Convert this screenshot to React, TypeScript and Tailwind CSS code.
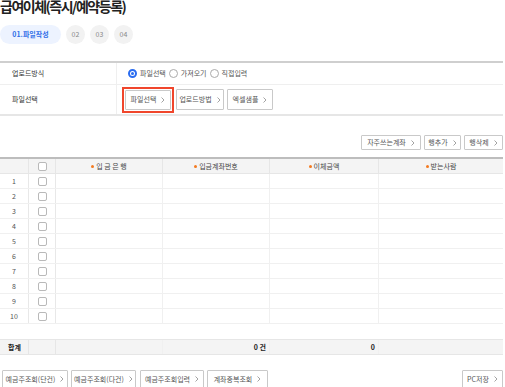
import React from "react";

const font = { fontFamily: '"Noto Sans CJK KR", "Noto Sans", sans-serif' };

function Chev() {
  return (
    <svg width="4" height="6" viewBox="0 0 4 6" className="ml-[5px] shrink-0">
      <path d="M0.5 0.5 L3 3 L0.5 5.5" fill="none" stroke="#999" strokeWidth="0.9" />
    </svg>
  );
}

function Btn({ label, className = "" }: { label: string; className?: string }) {
  return (
    <div
      className={
        "flex items-center justify-center border border-[#c9c9c9] bg-white text-[7px] text-[#555] rounded-[1px] " +
        className
      }
    >
      <span>{label}</span>
      <Chev />
    </div>
  );
}

function Radio({ on }: { on?: boolean }) {
  return on ? (
    <span className="w-[9px] h-[9px] rounded-full border-[2px] border-[#2a6cf0] flex items-center justify-center bg-white">
      <span className="w-[3px] h-[3px] rounded-full bg-[#2a6cf0]" />
    </span>
  ) : (
    <span className="w-[9px] h-[9px] rounded-full border border-[#aaa] bg-white" />
  );
}

function Check() {
  return <span className="block w-[9px] h-[9px] rounded-[2px] border border-[#b9b9b9] bg-white" />;
}

const cols = "grid grid-cols-[28px_27px_107px_107px_109px_125px]";

function HeadCell({ label }: { label: string }) {
  return (
    <div className="flex items-center justify-center border-l border-[#e6e6e6] text-[7px] text-[#444]">
      <span className="w-[3px] h-[3px] rounded-full bg-[#f47a20] mr-[2px]" />
      <span>{label}</span>
    </div>
  );
}

export default function App() {
  const rows = Array.from({ length: 10 }, (_, i) => i + 1);
  return (
    <div className="w-[505px] h-[387px] overflow-hidden bg-white relative" style={font}>
      {/* title */}
      <div className="h-[16px] -mt-[2px] text-[14px] leading-[16px] font-bold text-[#222] tracking-[-1.5px] whitespace-nowrap">
        급여이체(즉시/예약등록)
      </div>
      {/* steps */}
      <div className="mt-[11px] flex items-center h-[19px]">
        <div className="w-[61px] h-[19px] rounded-full bg-[#edf3ff] text-[#2f6fe8] font-bold text-[7px] flex items-center justify-center">
          01.파일작성
        </div>
        <div className="ml-[5px] w-[19px] h-[19px] rounded-full bg-[#f2f2f2] text-[#888] text-[7px] flex items-center justify-center">02</div>
        <div className="ml-[5px] w-[19px] h-[19px] rounded-full bg-[#f2f2f2] text-[#888] text-[7px] flex items-center justify-center">03</div>
        <div className="ml-[5px] w-[19px] h-[19px] rounded-full bg-[#f2f2f2] text-[#888] text-[7px] flex items-center justify-center">04</div>
      </div>
      {/* form table */}
      <div className="mt-[17px] w-[503px] border-t-2 border-[#cfcfcf] border-b-2 border-b-[#e6e6e6]">
        <div className="flex h-[22px] border-b border-[#efefef]">
          <div className="w-[117px] flex items-center pl-[12px] text-[7px] text-[#333] border-r border-[#efefef]">업로드방식</div>
          <div className="flex items-center pl-[11px] text-[7px] text-[#555]">
            <Radio on />
            <span className="ml-[3px]">파일선택</span>
            <span className="ml-[3px]" />
            <Radio />
            <span className="ml-[3px]">가져오기</span>
            <span className="ml-[3px]" />
            <Radio />
            <span className="ml-[3px]">직접입력</span>
          </div>
        </div>
        <div className="flex h-[29px]">
          <div className="w-[117px] flex items-center pl-[12px] text-[7px] text-[#333] border-r border-[#efefef]">파일선택</div>
          <div className="flex items-center pl-[5px]">
            <div className="border-2 border-[#f0462c] p-[1px]">
              <Btn label="파일선택" className="w-[46px] h-[20px]" />
            </div>
            <Btn label="업로드방법" className="ml-[2px] w-[48px] h-[21px]" />
            <Btn label="엑셀샘플" className="ml-[3px] w-[46px] h-[21px]" />
          </div>
        </div>
      </div>
      {/* action buttons */}
      <div className="mt-[19px] flex justify-end pr-[2px] gap-[3px] h-[15px]">
        <Btn label="자주쓰는계좌" className="w-[60px] h-[15px]" />
        <Btn label="행추가" className="w-[37px] h-[15px]" />
        <Btn label="행삭제" className="w-[39px] h-[15px]" />
      </div>
      {/* grid */}
      <div className="mt-[7px] w-[503px] border-t-2 border-[#bdbdbd]">
        <div className={cols + " h-[15px] bg-[#f4f4f4] border-b border-[#e6e6e6]"}>
          <div />
          <div className="flex items-center justify-center border-l border-[#e6e6e6]">
            <Check />
          </div>
          <HeadCell label="입 금 은 행" />
          <HeadCell label="입금계좌번호" />
          <HeadCell label="이체금액" />
          <HeadCell label="받는사람" />
        </div>
        {rows.map((r) => (
          <div key={r} className={cols + " h-[15px] border-b border-[#f0f0f0]"}>
            <div className="flex items-center justify-center text-[7px] text-[#555]">{r}</div>
            <div className="flex items-center justify-center border-l border-[#e8e8e8]">
              <Check />
            </div>
            <div className="border-l border-[#e8e8e8]" />
            <div className="border-l border-[#f0f0f0]" />
            <div className="border-l border-[#f0f0f0]" />
            <div className="border-l border-[#f0f0f0]" />
          </div>
        ))}
        <div className="h-[15px]" />
        <div className={cols + " h-[16px] bg-[#f4f4f4] border-y border-[#e6e6e6]"}>
          <div className="flex items-center pl-[8px] text-[7px] font-bold text-[#222]">합계</div>
          <div className="border-l border-[#e6e6e6]" />
          <div className="border-l border-[#e6e6e6]" />
          <div className="flex items-center justify-end pr-[3px] text-[7px] font-bold text-[#222] border-l border-[#f0f0f0]">0 건</div>
          <div className="flex items-center justify-end pr-[3px] text-[7px] font-bold text-[#222] border-l border-[#f0f0f0]">0</div>
          <div className="border-l border-[#f0f0f0]" />
        </div>
      </div>
      {/* bottom buttons */}
      <div className="mt-[15px] flex items-center pl-[2px] pr-[2px] h-[18px]">
        <Btn label="예금주조회(단건)" className="w-[66px] h-[18px]" />
        <Btn label="예금주조회(다건)" className="ml-[3px] w-[65px] h-[18px]" />
        <Btn label="예금주조회입력" className="ml-[4px] w-[64px] h-[18px]" />
        <Btn label="계좌중복조회" className="ml-[3px] w-[61px] h-[18px]" />
        <div className="flex-1" />
        <Btn label="PC저장" className="w-[41px] h-[18px]" />
      </div>
    </div>
  );
}
